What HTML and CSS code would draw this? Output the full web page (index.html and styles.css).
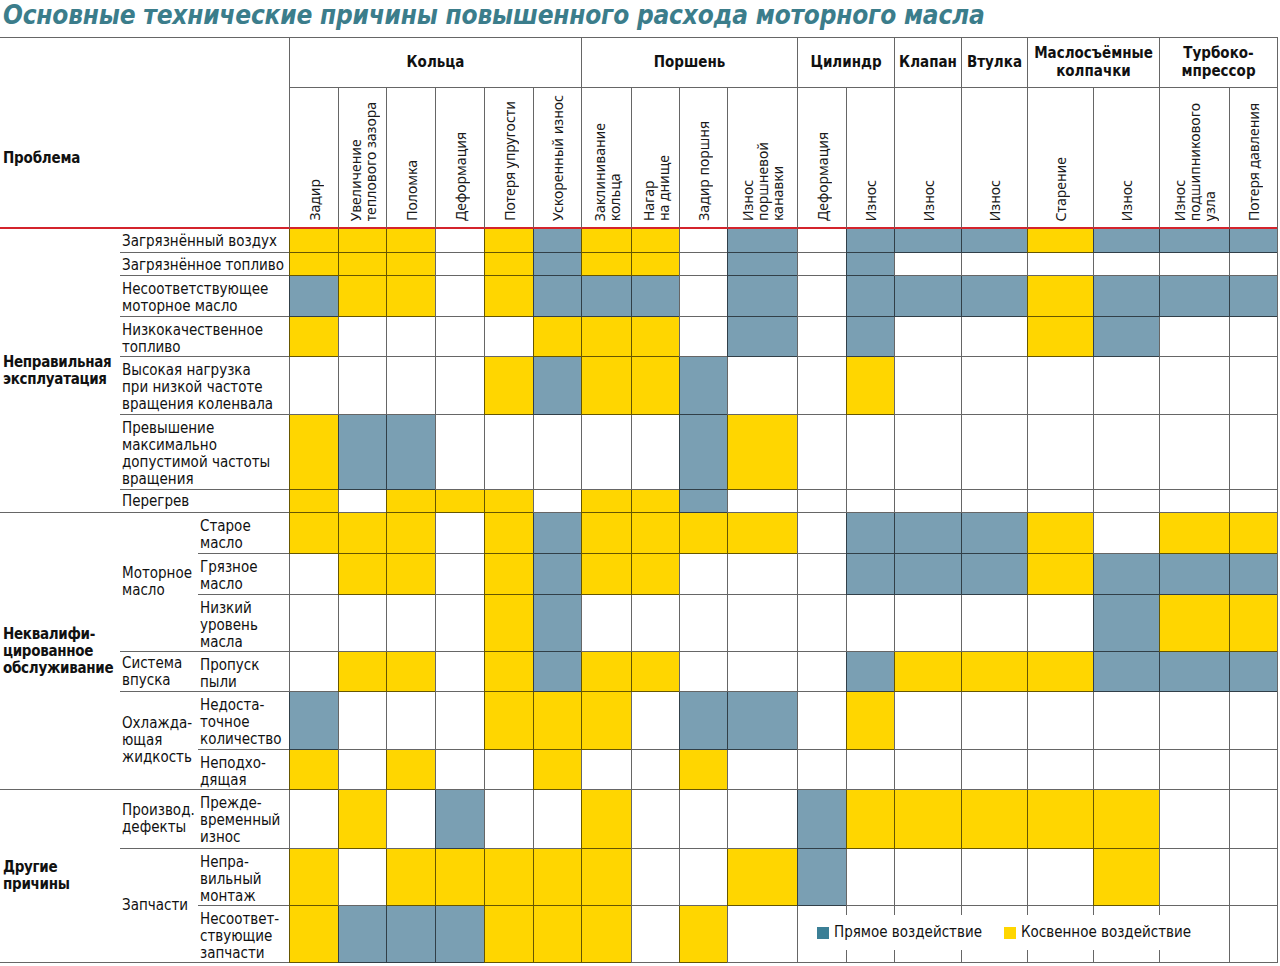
FILE: index.html
```html
<!DOCTYPE html>
<html lang="ru">
<head>
<meta charset="utf-8">
<title>Основные технические причины повышенного расхода моторного масла</title>
<link rel="stylesheet" href="styles.css">
</head>
<body>
<h1 class="title">Основные технические причины повышенного расхода моторного масла</h1>
<div class="grid">
  <div class="problem">Проблема</div>

  <div class="grp s6">Кольца</div>
  <div class="grp s4">Поршень</div>
  <div class="grp s2">Цилиндр</div>
  <div class="grp">Клапан</div>
  <div class="grp">Втулка</div>
  <div class="grp s2">Маслосъёмные<br>колпачки</div>
  <div class="grp s2">Турбоко-<br>мпрессор</div>

  <div class="sub"><span>Задир</span></div>
  <div class="sub"><span>Увеличение<br>теплового зазора</span></div>
  <div class="sub"><span>Поломка</span></div>
  <div class="sub"><span>Деформация</span></div>
  <div class="sub"><span>Потеря упругости</span></div>
  <div class="sub"><span>Ускоренный износ</span></div>
  <div class="sub"><span>Заклинивание<br>кольца</span></div>
  <div class="sub"><span>Нагар<br>на днище</span></div>
  <div class="sub"><span>Задир поршня</span></div>
  <div class="sub"><span>Износ<br>поршневой<br>канавки</span></div>
  <div class="sub"><span>Деформация</span></div>
  <div class="sub"><span>Износ</span></div>
  <div class="sub"><span>Износ</span></div>
  <div class="sub"><span>Износ</span></div>
  <div class="sub"><span>Старение</span></div>
  <div class="sub"><span>Износ</span></div>
  <div class="sub"><span>Износ<br>подшипникового<br>узла</span></div>
  <div class="sub"><span>Потеря давления</span></div>

  <!-- left labels -->
  <div class="cat cat-1">Неправильная<br>эксплуатация</div>
  <div class="item wide r3">Загрязнённый воздух</div>
  <div class="item wide r4">Загрязнённое топливо</div>
  <div class="item wide r5">Несоответствующее<br>моторное масло</div>
  <div class="item wide r6">Низкокачественное<br>топливо</div>
  <div class="item wide r7">Высокая нагрузка<br>при низкой частоте<br>вращения коленвала</div>
  <div class="item wide r8">Превышение<br>максимально<br>допустимой частоты<br>вращения</div>
  <div class="item wide r9">Перегрев</div>

  <div class="cat cat-2">Неквалифи-<br>цированное<br>обслуживание</div>
  <div class="grp2 g-oil">Моторное<br>масло</div>
  <div class="grp2 g-intake">Система<br>впуска</div>
  <div class="grp2 g-cool">Охлажда-<br>ющая<br>жидкость</div>
  <div class="item r10">Старое<br>масло</div>
  <div class="item r11">Грязное<br>масло</div>
  <div class="item r12">Низкий<br>уровень<br>масла</div>
  <div class="item r13">Пропуск<br>пыли</div>
  <div class="item r14">Недоста-<br>точное<br>количество</div>
  <div class="item r15">Неподхо-<br>дящая</div>

  <div class="cat cat-3">Другие<br>причины</div>
  <div class="grp2 g-def">Производ.<br>дефекты</div>
  <div class="grp2 g-parts">Запчасти</div>
  <div class="item r16">Прежде-<br>временный<br>износ</div>
  <div class="item r17">Непра-<br>вильный<br>монтаж</div>
  <div class="item r18">Несоответ-<br>ствующие<br>запчасти</div>

  <!-- data: row 3 Загрязнённый воздух -->
  <i class="c y"></i><i class="c y"></i><i class="c y"></i><i class="c"></i><i class="c y"></i><i class="c b"></i><i class="c y"></i><i class="c y"></i><i class="c"></i><i class="c b"></i><i class="c"></i><i class="c b"></i><i class="c b"></i><i class="c b"></i><i class="c y"></i><i class="c b"></i><i class="c b"></i><i class="c b"></i>
  <!-- row 4 Загрязнённое топливо -->
  <i class="c y"></i><i class="c y"></i><i class="c y"></i><i class="c"></i><i class="c y"></i><i class="c b"></i><i class="c y"></i><i class="c y"></i><i class="c"></i><i class="c b"></i><i class="c"></i><i class="c b"></i><i class="c"></i><i class="c"></i><i class="c"></i><i class="c"></i><i class="c"></i><i class="c"></i>
  <!-- row 5 Несоответствующее моторное масло -->
  <i class="c b"></i><i class="c y"></i><i class="c y"></i><i class="c"></i><i class="c y"></i><i class="c b"></i><i class="c b"></i><i class="c b"></i><i class="c"></i><i class="c b"></i><i class="c"></i><i class="c b"></i><i class="c b"></i><i class="c b"></i><i class="c y"></i><i class="c b"></i><i class="c b"></i><i class="c b"></i>
  <!-- row 6 Низкокачественное топливо -->
  <i class="c y"></i><i class="c"></i><i class="c"></i><i class="c"></i><i class="c"></i><i class="c y"></i><i class="c y"></i><i class="c y"></i><i class="c"></i><i class="c b"></i><i class="c"></i><i class="c b"></i><i class="c"></i><i class="c"></i><i class="c y"></i><i class="c b"></i><i class="c"></i><i class="c"></i>
  <!-- row 7 Высокая нагрузка -->
  <i class="c"></i><i class="c"></i><i class="c"></i><i class="c"></i><i class="c y"></i><i class="c b"></i><i class="c y"></i><i class="c y"></i><i class="c b"></i><i class="c"></i><i class="c"></i><i class="c y"></i><i class="c"></i><i class="c"></i><i class="c"></i><i class="c"></i><i class="c"></i><i class="c"></i>
  <!-- row 8 Превышение -->
  <i class="c y"></i><i class="c b"></i><i class="c b"></i><i class="c"></i><i class="c"></i><i class="c"></i><i class="c"></i><i class="c"></i><i class="c b"></i><i class="c y"></i><i class="c"></i><i class="c"></i><i class="c"></i><i class="c"></i><i class="c"></i><i class="c"></i><i class="c"></i><i class="c"></i>
  <!-- row 9 Перегрев -->
  <i class="c y"></i><i class="c"></i><i class="c y"></i><i class="c y"></i><i class="c y"></i><i class="c"></i><i class="c y"></i><i class="c y"></i><i class="c b"></i><i class="c"></i><i class="c"></i><i class="c"></i><i class="c"></i><i class="c"></i><i class="c"></i><i class="c"></i><i class="c"></i><i class="c"></i>
  <!-- row 10 Старое масло -->
  <i class="c y"></i><i class="c y"></i><i class="c y"></i><i class="c"></i><i class="c y"></i><i class="c b"></i><i class="c y"></i><i class="c y"></i><i class="c y"></i><i class="c y"></i><i class="c"></i><i class="c b"></i><i class="c b"></i><i class="c b"></i><i class="c y"></i><i class="c"></i><i class="c y"></i><i class="c y"></i>
  <!-- row 11 Грязное масло -->
  <i class="c"></i><i class="c y"></i><i class="c y"></i><i class="c"></i><i class="c y"></i><i class="c b"></i><i class="c y"></i><i class="c y"></i><i class="c"></i><i class="c"></i><i class="c"></i><i class="c b"></i><i class="c b"></i><i class="c b"></i><i class="c y"></i><i class="c b"></i><i class="c b"></i><i class="c b"></i>
  <!-- row 12 Низкий уровень масла -->
  <i class="c"></i><i class="c"></i><i class="c"></i><i class="c"></i><i class="c y"></i><i class="c b"></i><i class="c"></i><i class="c"></i><i class="c"></i><i class="c"></i><i class="c"></i><i class="c"></i><i class="c"></i><i class="c"></i><i class="c"></i><i class="c b"></i><i class="c y"></i><i class="c y"></i>
  <!-- row 13 Пропуск пыли -->
  <i class="c"></i><i class="c y"></i><i class="c y"></i><i class="c"></i><i class="c y"></i><i class="c b"></i><i class="c y"></i><i class="c y"></i><i class="c"></i><i class="c"></i><i class="c"></i><i class="c b"></i><i class="c y"></i><i class="c y"></i><i class="c y"></i><i class="c b"></i><i class="c b"></i><i class="c b"></i>
  <!-- row 14 Недостаточное количество -->
  <i class="c b"></i><i class="c"></i><i class="c"></i><i class="c"></i><i class="c y"></i><i class="c y"></i><i class="c y"></i><i class="c"></i><i class="c b"></i><i class="c b"></i><i class="c"></i><i class="c y"></i><i class="c"></i><i class="c"></i><i class="c"></i><i class="c"></i><i class="c"></i><i class="c"></i>
  <!-- row 15 Неподходящая -->
  <i class="c y"></i><i class="c"></i><i class="c y"></i><i class="c"></i><i class="c"></i><i class="c y"></i><i class="c"></i><i class="c"></i><i class="c y"></i><i class="c"></i><i class="c"></i><i class="c"></i><i class="c"></i><i class="c"></i><i class="c"></i><i class="c"></i><i class="c"></i><i class="c"></i>
  <!-- row 16 Преждевременный износ -->
  <i class="c"></i><i class="c y"></i><i class="c"></i><i class="c b"></i><i class="c"></i><i class="c"></i><i class="c y"></i><i class="c"></i><i class="c"></i><i class="c"></i><i class="c b"></i><i class="c y"></i><i class="c y"></i><i class="c y"></i><i class="c y"></i><i class="c y"></i><i class="c"></i><i class="c"></i>
  <!-- row 17 Неправильный монтаж -->
  <i class="c y"></i><i class="c"></i><i class="c y"></i><i class="c y"></i><i class="c y"></i><i class="c y"></i><i class="c y"></i><i class="c"></i><i class="c"></i><i class="c y"></i><i class="c b"></i><i class="c"></i><i class="c"></i><i class="c"></i><i class="c"></i><i class="c y"></i><i class="c"></i><i class="c"></i>
  <!-- row 18 Несоответствующие запчасти -->
  <i class="c y"></i><i class="c b"></i><i class="c b"></i><i class="c b"></i><i class="c y"></i><i class="c y"></i><i class="c y"></i><i class="c"></i><i class="c y"></i><i class="c"></i><i class="c"></i><i class="c"></i><i class="c"></i><i class="c"></i><i class="c"></i><i class="c"></i><i class="c"></i><i class="c"></i>

  <div class="legend">
    <span class="key"><span class="sw sw-b"></span>Прямое воздействие</span>
    <span class="key"><span class="sw sw-y"></span>Косвенное воздействие</span>
  </div>
</div>
</body>
</html>
```

FILE: styles.css
```css
* { box-sizing: border-box; }

html, body {
  margin: 0;
  padding: 0;
  background: #fff;
}

body {
  width: 1280px;
  font-family: "DejaVu Sans Condensed", "DejaVu Sans", "Liberation Sans", sans-serif;
  font-stretch: condensed;
  color: #111;
}

.title {
  margin: 0;
  height: 37px;
  padding-left: 3px;
  font-size: 26px;
  line-height: 31px;
  font-weight: bold;
  font-style: italic;
  color: #3b7d8b;
  white-space: nowrap;
  letter-spacing: -0.2px;
}

.grid {
  position: relative;
  box-sizing: content-box;
  width: 1277px;
  border-top: 1px solid #666;
  border-right: 1px solid #666;
  display: grid;
  grid-template-columns: 120px 78px 91px 49px 48px 49px 49px 49px 48px 50px 48px 48px 70px 49px 48px 67px 66px 66px 66px 70px 48px;
  grid-template-rows: 50px 141px 24px 23px 41px 40px 58px 75px 23px 41px 41px 57px 40px 58px 40px 59px 57px 57px;
}

/* header */
.problem {
  grid-column: 1 / 4;
  grid-row: 1 / 3;
  border-bottom: 2px solid #d4242c;
  padding: 112px 0 0 3px;
  font-size: 15px;
  line-height: 17px;
  font-weight: bold;
  letter-spacing: -0.2px;
}

.grp {
  border-left: 1px solid #666;
  border-bottom: 1px solid #666;
  display: flex;
  align-items: center;
  justify-content: center;
  text-align: center;
  font-size: 15px;
  line-height: 18px;
  font-weight: bold;
  padding-bottom: 1px;
}
.s2 { grid-column: span 2; }
.s4 { grid-column: span 4; }
.s6 { grid-column: span 6; }

.sub {
  border-left: 1px solid #666;
  border-bottom: 2px solid #d4242c;
  display: flex;
  justify-content: center;
  align-items: flex-end;
  padding-bottom: 6px;
}
.sub span {
  writing-mode: vertical-rl;
  transform: rotate(180deg);
  font-family: "Noto Sans", "Open Sans", sans-serif;
  font-stretch: normal;
  font-size: 14px;
  line-height: 15px;
  white-space: nowrap;
  color: #1a1a1a;
}

/* left labels */
.cat {
  grid-column: 1;
  border-bottom: 1px solid #666;
  display: flex;
  align-items: center;
  padding-left: 3px;
  font-size: 15px;
  line-height: 17px;
  font-weight: bold;
  letter-spacing: -0.3px;
}
.cat-1 { grid-row: 3 / 10; }
.cat-2 { grid-row: 10 / 16; }
.cat-3 { grid-row: 16 / 19; }

.grp2 {
  grid-column: 2;
  border-bottom: 1px solid #666;
  display: flex;
  align-items: center;
  padding-left: 2px;
  font-size: 15px;
  line-height: 17px;
}
.g-oil { grid-row: 10 / 13; }
.g-intake { grid-row: 13; }
.g-cool { grid-row: 14 / 16; }
.g-def { grid-row: 16; }
.g-parts { grid-row: 17 / 19; }

.item {
  grid-column: 3;
  border-bottom: 1px solid #666;
  padding: 5px 0 0 2px;
  font-size: 15px;
  line-height: 17px;
  white-space: nowrap;
}
.item.wide { grid-column: 2 / 4; }
.r3 { grid-row: 3; padding-top: 4px; }
.r4 { grid-row: 4; padding-top: 4px; }
.r5 { grid-row: 5; }
.r6 { grid-row: 6; }
.r7 { grid-row: 7; }
.r8 { grid-row: 8; }
.r9 { grid-row: 9; padding-top: 3px; }
.r10 { grid-row: 10; }
.r11 { grid-row: 11; }
.r12 { grid-row: 12; }
.r13 { grid-row: 13; }
.r14 { grid-row: 14; }
.r15 { grid-row: 15; }
.r16 { grid-row: 16; }
.r17 { grid-row: 17; }
.r18 { grid-row: 18; }

/* data cells */
.c {
  display: block;
  border-left: 1px solid rgba(0, 0, 0, 0.6);
  border-bottom: 1px solid rgba(0, 0, 0, 0.6);
}
.y { background: #ffd600; }
.b { background: #7a9fb3; }

/* legend overlay */
.legend {
  position: absolute;
  left: 802px;
  top: 877px;
  width: 396px;
  height: 35px;
  background: #fff;
  display: flex;
  align-items: center;
  gap: 22px;
  padding-left: 15px;
  font-size: 15px;
  line-height: 17px;
  white-space: nowrap;
}
.key {
  display: flex;
  align-items: center;
  gap: 5px;
}
.sw {
  display: inline-block;
  width: 12px;
  height: 12px;
}
.sw-b { background: #3b7f96; }
.sw-y { background: #ffd600; }
```
